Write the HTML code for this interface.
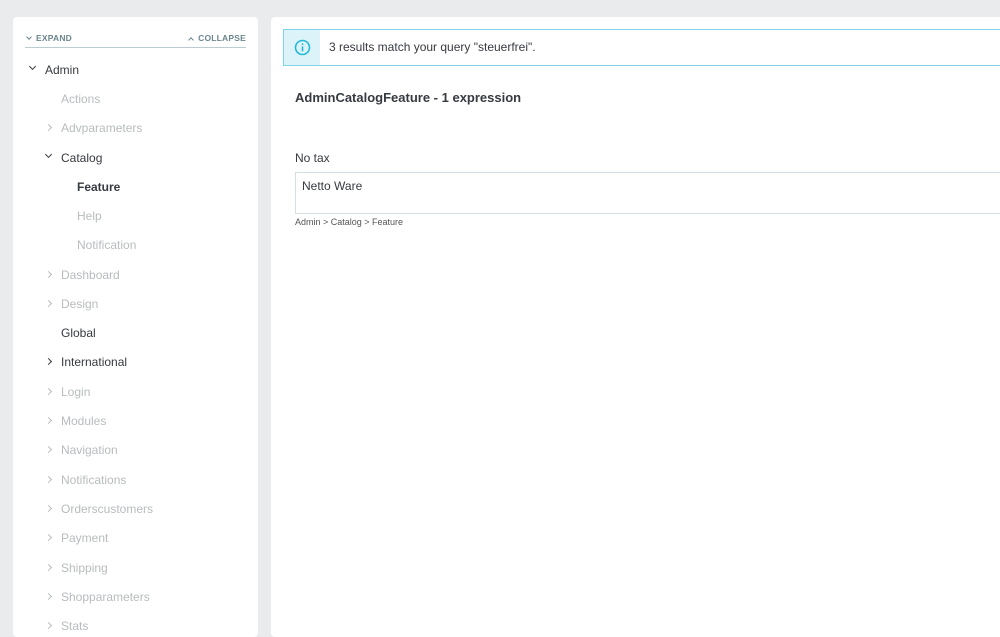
<!DOCTYPE html>
<html><head><meta charset="utf-8"><style>
*{margin:0;padding:0;box-sizing:border-box}
body{width:1000px;height:623px;overflow:hidden;background:#eaebec;font-family:"Liberation Sans",sans-serif;color:#363a41;position:relative}
.side{position:absolute;left:13px;top:17px;width:245px;height:620px;background:#fff;border-radius:4px}
.main{position:absolute;left:271px;top:17px;width:740px;height:620px;background:#fff;border-radius:4px}
.hdr{position:absolute;left:12px;top:14px;width:221px;height:17px;border-bottom:1px solid #bbcdd2;font-size:8.5px;font-weight:bold;color:#6c868e;letter-spacing:.2px}
.it{position:absolute;font-size:12px;line-height:14px;white-space:nowrap}
.g{color:#b7bcbe}
.chev{position:absolute;width:5px;height:5px;border-right:1.4px solid currentColor;border-bottom:1.4px solid currentColor}
.r{transform:rotate(-45deg)}
.d{transform:rotate(45deg)}
</style></head><body>
<div class="side">
 <div class="hdr"><span style="position:absolute;left:2px;top:2px"><span class="chev d" style="position:relative;display:inline-block;width:4px;height:4px;top:-2px;margin-right:5px;border-width:1px"></span>EXPAND</span><span style="position:absolute;right:0;top:2px"><span style="position:relative;display:inline-block;width:4px;height:4px;top:1px;margin-right:5px;border-left:1px solid currentColor;border-top:1px solid currentColor;transform:rotate(45deg)"></span>COLLAPSE</span></div>
</div>
<div class="main">
 <div style="position:absolute;left:12px;top:12px;width:730px;height:37px;border:1px solid #7fd3e5;background:#fff">
  <div style="position:absolute;left:0;top:0;width:36px;height:35px;background:#dcf4f9;border-right:1px solid #dcf4f9"></div>
  <svg style="position:absolute;left:10px;top:9px" width="17" height="17" viewBox="0 0 17 17"><circle cx="8.5" cy="8.5" r="7" fill="none" stroke="#25b9d7" stroke-width="1.6"/><rect x="7.7" y="7.3" width="1.6" height="5" fill="#25b9d7"/><rect x="7.7" y="4.4" width="1.6" height="1.6" fill="#25b9d7"/></svg>
  <div style="position:absolute;left:45px;top:10px;font-size:12px">3 results match your query "steuerfrei".</div>
 </div>
 <div style="position:absolute;left:24px;top:73px;font-size:13px;font-weight:bold">AdminCatalogFeature - 1 expression</div>
 <div style="position:absolute;left:24px;top:134px;font-size:12px">No tax</div>
 <div style="position:absolute;left:24px;top:155px;width:720px;height:42px;border:1px solid #d3dfe3"><div style="position:absolute;left:6px;top:6px;font-size:12px">Netto Ware</div></div>
 <div style="position:absolute;left:24px;top:200px;font-size:9px;color:#555">Admin &gt; Catalog &gt; Feature</div>
</div>
<div class="it" style="left:30px;top:63px"><span class="chev d" style="left:0;top:1px;color:#363a41"></span><span style="position:absolute;left:15px">Admin</span></div>
<div class="it g" style="left:61px;top:92px">Actions</div>
<div class="it g" style="left:46px;top:121px"><span class="chev r" style="left:0;top:4px"></span><span style="position:absolute;left:15px">Advparameters</span></div>
<div class="it" style="left:46px;top:151px"><span class="chev d" style="left:0;top:1px"></span><span style="position:absolute;left:15px">Catalog</span></div>
<div class="it" style="left:77px;top:180px;font-weight:bold">Feature</div>
<div class="it g" style="left:77px;top:209px">Help</div>
<div class="it g" style="left:77px;top:238px">Notification</div>
<div class="it g" style="left:46px;top:268px"><span class="chev r" style="left:0;top:4px"></span><span style="position:absolute;left:15px">Dashboard</span></div>
<div class="it g" style="left:46px;top:297px"><span class="chev r" style="left:0;top:4px"></span><span style="position:absolute;left:15px">Design</span></div>
<div class="it" style="left:61px;top:326px">Global</div>
<div class="it" style="left:46px;top:355px"><span class="chev r" style="left:0;top:4px"></span><span style="position:absolute;left:15px">International</span></div>
<div class="it g" style="left:46px;top:385px"><span class="chev r" style="left:0;top:4px"></span><span style="position:absolute;left:15px">Login</span></div>
<div class="it g" style="left:46px;top:414px"><span class="chev r" style="left:0;top:4px"></span><span style="position:absolute;left:15px">Modules</span></div>
<div class="it g" style="left:46px;top:443px"><span class="chev r" style="left:0;top:4px"></span><span style="position:absolute;left:15px">Navigation</span></div>
<div class="it g" style="left:46px;top:473px"><span class="chev r" style="left:0;top:4px"></span><span style="position:absolute;left:15px">Notifications</span></div>
<div class="it g" style="left:46px;top:502px"><span class="chev r" style="left:0;top:4px"></span><span style="position:absolute;left:15px">Orderscustomers</span></div>
<div class="it g" style="left:46px;top:531px"><span class="chev r" style="left:0;top:4px"></span><span style="position:absolute;left:15px">Payment</span></div>
<div class="it g" style="left:46px;top:561px"><span class="chev r" style="left:0;top:4px"></span><span style="position:absolute;left:15px">Shipping</span></div>
<div class="it g" style="left:46px;top:590px"><span class="chev r" style="left:0;top:4px"></span><span style="position:absolute;left:15px">Shopparameters</span></div>
<div class="it g" style="left:46px;top:619px"><span class="chev r" style="left:0;top:4px"></span><span style="position:absolute;left:15px">Stats</span></div>
</body></html>
